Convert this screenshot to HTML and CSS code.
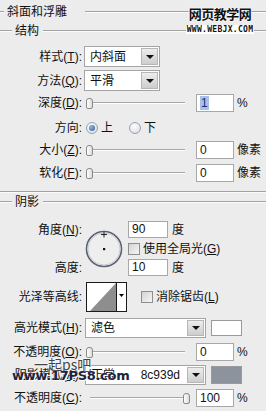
FILE: index.html
```html
<!DOCTYPE html>
<html lang="zh">
<head>
<meta charset="utf-8">
<link rel="stylesheet" href="styles.css">
</head>
<body>
<div class="panel">
  <div class="legend legend-title">
    <span class="rule rule-lead4"></span>
    <span class="legend-text title-text">斜面和浮雕</span>
    <span class="rule rule-grow rule-gap"></span>
  </div>
  <div class="legend legend-sub">
    <span class="rule rule-lead12"></span>
    <span class="legend-text">结构</span>
    <span class="rule rule-grow"></span>
  </div>

  <div class="row row-sel row-style">
    <span class="label">样式(<u>T</u>):</span>
    <div class="select sel-short"><span class="val">内斜面</span><span class="btn"><i class="caret"></i></span></div>
  </div>
  <div class="row row-sel row-method">
    <span class="label">方法(<u>Q</u>):</span>
    <div class="select sel-short"><span class="val">平滑</span><span class="btn"><i class="caret"></i></span></div>
  </div>
  <div class="row row-num row-depth">
    <span class="label">深度(<u>D</u>):</span>
    <div class="slider"><span class="thumb"></span><span class="track track-left"></span></div>
    <div class="field"><span class="sel-text">1</span></div>
    <span class="unit">%</span>
  </div>
  <div class="row row-dir">
    <span class="label">方向:</span>
    <span class="radio checked"></span><span class="radio-text">上</span>
    <span class="radio radio-second"></span><span class="radio-text">下</span>
  </div>
  <div class="row row-num row-size">
    <span class="label">大小(<u>Z</u>):</span>
    <div class="slider"><span class="thumb"></span><span class="track track-left"></span></div>
    <div class="field">0</div>
    <span class="unit">像素</span>
  </div>
  <div class="row row-num row-soft">
    <span class="label">软化(<u>F</u>):</span>
    <div class="slider"><span class="thumb"></span><span class="track track-left"></span></div>
    <div class="field">0</div>
    <span class="unit">像素</span>
  </div>

  <div class="separator"></div>

  <div class="legend legend-sub legend-shadow">
    <span class="rule rule-lead12"></span>
    <span class="legend-text">阴影</span>
    <span class="rule rule-grow"></span>
  </div>

  <div class="angle">
    <span class="label a-label1">角度(<u>N</u>):</span>
    <div class="dial">
      <svg width="38" height="38" viewBox="0 0 38 38">
        <circle cx="19" cy="19" r="17.5" fill="#eeeeee" stroke="#5c6272" stroke-width="1.6"/>
        <circle cx="19" cy="19" r="16" fill="none" stroke="#c9ccd3" stroke-width="1"/>
        <path d="M19 1.5v6M16 4.5h6" stroke="#222" stroke-width="1"/>
        <rect x="18" y="18" width="2.2" height="2.2" fill="#111"/>
      </svg>
    </div>
    <div class="a-in1"><div class="field field-angle">90</div><span class="unit unit-deg">度</span></div>
    <div class="a-check"><span class="check"></span><span class="check-text">使用全局光(<u>G</u>)</span></div>
    <span class="label a-label2">高度:</span>
    <div class="a-in2"><div class="field field-angle">10</div><span class="unit unit-deg">度</span></div>
  </div>

  <div class="row row-contour">
    <span class="label">光泽等高线:</span>
    <div class="contour">
      <svg width="41" height="30" viewBox="0 0 41 30">
        <rect x="0.5" y="0.5" width="40" height="29" fill="#fff" stroke="#1a1a1a"/>
        <polygon points="4,29 30,1 30,29" fill="#8e8e8e"/>
        <line x1="30.5" y1="1" x2="30.5" y2="29" stroke="#1a1a1a"/>
        <polygon points="33,12 38,12 35.5,15" fill="#000"/>
      </svg>
    </div>
    <span class="check check-aa"></span><span class="check-text">消除锯齿(<u>L</u>)</span>
  </div>

  <div class="row row-sel row-hl">
    <span class="label">高光模式(<u>H</u>):</span>
    <div class="select sel-long"><span class="val">滤色</span><span class="btn"><i class="caret"></i></span></div>
    <span class="swatch swatch-white"></span>
  </div>
  <div class="row row-num row-op1">
    <span class="label">不透明度(<u>O</u>):</span>
    <div class="slider"><span class="thumb"></span><span class="track track-left"></span></div>
    <div class="field">0</div>
    <span class="unit">%</span>
  </div>
  <div class="row row-sel row-sh">
    <span class="label">阴影模式(<u>A</u>):</span>
    <div class="select sel-long"><span class="val">正常</span><span class="val-right">8c939d</span><span class="btn"><i class="caret"></i></span></div>
    <span class="swatch swatch-grey"></span>
  </div>
  <div class="row row-num row-op2">
    <span class="label">不透明度(<u>C</u>):</span>
    <div class="slider"><span class="track track-right"></span><span class="thumb"></span></div>
    <div class="field">100</div>
    <span class="unit">%</span>
  </div>

  <div class="wm-top">
    <span class="wm-cn">网页教学网</span>
    <span class="wm-url">WWW.WEBJX.COM</span>
  </div>
  <div class="wm-bottom">
    <span class="wm-cn2">一起ps吧</span>
    <span class="wm-url2">www.17PS8.com</span>
  </div>
</div>
</body>
</html>
```

FILE: styles.css
```css
* { box-sizing: border-box; }
html, body { margin: 0; padding: 0; }
body {
  width: 266px;
  height: 411px;
  overflow: hidden;
  background: #ececec;
  font-family: "Liberation Sans", "Noto Sans CJK SC", sans-serif;
  font-size: 12px;
  color: #111;
}
u { text-decoration: underline; text-underline-offset: 1px; }

.panel {
  position: relative;
  display: flex;
  flex-direction: column;
  width: 266px;
  height: 411px;
}

/* group legends */
.legend { display: flex; align-items: center; }
.legend-title { height: 23px; }
.legend-sub { height: 16px; }
.legend-text { line-height: 14px; white-space: nowrap; }
.title-text { margin-left: 3px; }
.legend-sub .legend-text { margin: 0 4px 0 3px; }
.rule {
  display: block;
  height: 2px;
  border-top: 1px solid #a2a2a2;
  border-bottom: 1px solid #fbfbfb;
}
.rule-lead4 { width: 4px; }
.rule-lead12 { width: 12px; }
.rule-grow { flex: 1; }
.rule-gap { margin-left: 18px; }

.separator {
  margin-top: 9px;
  height: 2px;
  border-top: 1px solid #a2a2a2;
  border-bottom: 1px solid #fbfbfb;
}
.legend-shadow { margin-top: 1px; }

/* rows */
.row { display: flex; align-items: center; }
.label {
  width: 82px;
  flex: none;
  text-align: right;
  white-space: nowrap;
  line-height: 14px;
}
.row-sel { height: 21px; }
.row-num { height: 18px; }
.row-style { margin-top: 7px; }
.row-method { margin-top: 3px; }
.row-depth { margin-top: 3px; }
.row-dir { height: 20px; margin-top: 6px; }
.row-size { margin-top: 3px; }
.row-soft { margin-top: 5px; }

/* select */
.select {
  display: flex;
  align-items: center;
  height: 21px;
  margin-left: 2px;
  border: 1px solid #a4a4a4;
  background: #fff;
}
.sel-short { width: 76px; }
.sel-long { width: 121px; height: 20px; margin-left: 3px; }
.select .val { flex: 1; padding-left: 5px; line-height: 14px; white-space: nowrap; }
.select .val-right { padding-right: 6px; line-height: 14px; }
.select .btn {
  width: 17px;
  align-self: stretch;
  margin: 1px;
  background: linear-gradient(#ededed, #cdcdcd);
  border: 1px solid #b7b7b7;
  display: flex;
  align-items: center;
  justify-content: center;
}
.caret {
  display: block;
  width: 0;
  height: 0;
  border-left: 4px solid transparent;
  border-right: 4px solid transparent;
  border-top: 4px solid #111;
}

/* slider */
.slider {
  width: 104px;
  margin-left: 4px;
  height: 12px;
  display: flex;
  align-items: center;
}
.thumb {
  width: 7px;
  height: 11px;
  flex: none;
  border: 1px solid #8a8a8a;
  border-radius: 3px 3px 2px 2px;
  background: linear-gradient(90deg, #ffffff, #dcdcdc);
}
.track {
  flex: 1;
  height: 2px;
  border-top: 1px solid #a8a8a8;
  border-bottom: 1px solid #ffffff;
}
.track-left { margin-right: 5px; }
.track-right { margin-left: 4px; }

/* fields */
.field {
  width: 38px;
  height: 18px;
  margin-left: 6px;
  border: 1px solid #a8a8a8;
  background: #fff;
  padding-left: 3px;
  line-height: 16px;
  font-size: 12px;
}
.sel-text { background: #a9c1e6; color: #1b2f7a; padding: 0 1px; }
.unit { margin-left: 3px; line-height: 14px; white-space: nowrap; }

/* radio */
.radio {
  width: 12px;
  height: 12px;
  flex: none;
  margin-left: 4px;
  border-radius: 50%;
  border: 1px solid #97a3b3;
  background: radial-gradient(circle at 40% 35%, #ffffff, #d8d8d8);
  display: flex;
  align-items: center;
  justify-content: center;
}
.radio.checked::after {
  content: "";
  width: 6px;
  height: 6px;
  border-radius: 50%;
  background: radial-gradient(circle at 35% 35%, #8fb6e0, #2a5d98);
}
.radio-second { margin-left: 16px; }
.radio-text { margin-left: 3px; line-height: 14px; }

/* angle block */
.angle {
  display: grid;
  grid-template-columns: 82px 46px auto;
  grid-template-rows: 17px 21px 17px;
  margin-top: 11px;
}
.a-label1 { grid-column: 1; grid-row: 1; align-self: center; }
.a-label2 { grid-column: 1; grid-row: 3; align-self: center; }
.dial { grid-column: 2; grid-row: 1 / 4; align-self: center; margin-left: 3px; height: 38px; }
.dial svg { display: block; }
.a-in1 { grid-column: 3; grid-row: 1; display: flex; align-items: center; }
.a-check { grid-column: 3; grid-row: 2; display: flex; align-items: center; }
.a-in2 { grid-column: 3; grid-row: 3; display: flex; align-items: center; }
.field-angle { width: 40px; height: 17px; margin-left: 0; line-height: 15px; }
.unit-deg { margin-left: 4px; }

.check {
  width: 12px;
  height: 12px;
  flex: none;
  border: 1px solid #8e8e8e;
  background: linear-gradient(135deg, #d4d4d4, #f6f6f6);
}
.check-text { margin-left: 3px; line-height: 14px; white-space: nowrap; }

/* contour */
.row-contour { height: 30px; margin-top: 6px; }
.contour { margin-left: 4px; height: 30px; }
.contour svg { display: block; }
.check-aa { margin-left: 14px; }

/* highlight / shadow */
.row-hl { height: 20px; margin-top: 6px; }
.row-op1 { margin-top: 5px; }
.row-sh { height: 20px; margin-top: 4px; }
.row-op2 { margin-top: 4px; }
.swatch {
  width: 31px;
  height: 16px;
  margin-left: 5px;
  border: 1px solid #9a9a9a;
}
.swatch-white { background: #fff; }
.swatch-grey { background: #8c939d; height: 18px; }

/* watermarks (overlays) */
.wm-top {
  position: absolute;
  left: 183px;
  top: 6px;
  width: 74px;
  display: flex;
  flex-direction: column;
  align-items: center;
}
.wm-cn {
  font-family: "Noto Sans CJK SC", sans-serif;
  font-size: 13px;
  line-height: 16px;
  font-weight: 700;
  color: #111;
  letter-spacing: -0.5px;
  text-shadow: 0 0 2px #fff, 0 0 2px #fff;
}
.wm-url {
  margin-top: 3px;
  background: #fff;
  font-family: "DejaVu Sans Mono", monospace;
  font-size: 8px;
  line-height: 9px;
  font-weight: 700;
  color: #111;
  letter-spacing: 0.3px;
  padding: 0 1px;
}
.wm-bottom {
  position: absolute;
  left: 12px;
  top: 356px;
  width: 80px;
  height: 30px;
}
.wm-cn2 {
  position: absolute;
  left: 22px;
  top: 0;
  font-family: "Noto Sans CJK SC", sans-serif;
  font-size: 14px;
  line-height: 16px;
  color: #444;
  text-shadow: 0 0 2px #fff, 0 0 2px #fff;
}
.wm-url2 {
  position: absolute;
  left: 0;
  top: 12px;
  font-family: "DejaVu Sans", sans-serif;
  font-size: 13px;
  line-height: 16px;
  font-weight: 700;
  color: #1c2340;
  letter-spacing: -0.3px;
  text-shadow: 0 0 1px #fff, 1px 1px 0 #fff;
}
```
